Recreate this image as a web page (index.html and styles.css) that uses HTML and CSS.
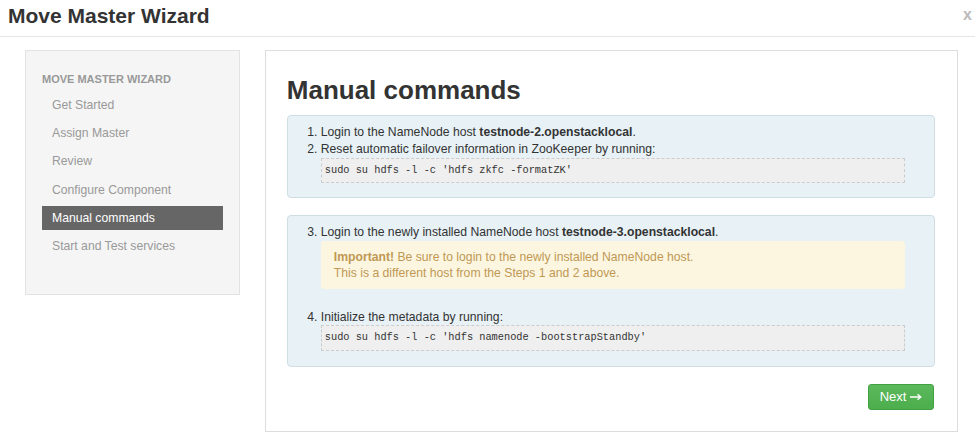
FILE: index.html
```html
<!DOCTYPE html>
<html>
<head>
<meta charset="utf-8">
<link rel="stylesheet" href="styles.css">
</head>
<body>
<div class="modal">
  <div class="modal-header">
    <h3 class="modal-title">Move Master Wizard</h3>
    <span class="close">x</span>
  </div>
  <div class="modal-body">
    <div class="sidebar">
      <div class="nav-header">MOVE MASTER WIZARD</div>
      <ul class="nav">
        <li>Get Started</li>
        <li>Assign Master</li>
        <li>Review</li>
        <li>Configure Component</li>
        <li class="active">Manual commands</li>
        <li>Start and Test services</li>
      </ul>
    </div>
    <div class="content">
      <h2 class="heading">Manual commands</h2>
      <div class="well">
        <ol class="steps" start="1">
          <li>Login to the NameNode host <b>testnode-2.openstacklocal</b>.</li>
          <li>Reset automatic failover information in ZooKeeper by running:
            <pre class="code">sudo su hdfs -l -c 'hdfs zkfc -formatZK'</pre>
          </li>
        </ol>
      </div>
      <div class="well well-2">
        <ol class="steps" start="3">
          <li>Login to the newly installed NameNode host <b>testnode-3.openstacklocal</b>.
            <div class="alert"><b>Important!</b> Be sure to login to the newly installed NameNode host.<br>This is a different host from the Steps 1 and 2 above.</div>
          </li>
          <li class="gap">Initialize the metadata by running:
            <pre class="code">sudo su hdfs -l -c 'hdfs namenode -bootstrapStandby'</pre>
          </li>
        </ol>
      </div>
      <div class="actions">
        <button class="btn-next">Next <svg class="arrow" width="12" height="8" viewBox="0 0 12 8"><path d="M0 4H10.5M7.5 1.2L10.8 4L7.5 6.8" fill="none" stroke="#fff" stroke-width="1.3"/></svg></button>
      </div>
    </div>
  </div>
</div>
</body>
</html>
```
FILE: styles.css
```css
* { box-sizing: border-box; }
html, body { margin: 0; padding: 0; background: #fff; }
body {
  font-family: "Liberation Sans", Arial, sans-serif;
  font-size: 12.2px;
  color: #333;
  width: 975px;
  height: 447px;
  overflow: hidden;
}
.modal-header {
  height: 37px;
  border-bottom: 1px solid #e5e5e5;
  display: flex;
  align-items: flex-start;
  justify-content: space-between;
  padding: 0 8px 0 8px;
}
.modal-title {
  margin: 4px 0 0 0;
  font-size: 21px;
  line-height: 24px;
  font-weight: bold;
  color: #333;
}
.close {
  margin-top: 6px;
  margin-right: -5px;
  font-size: 16px;
  font-weight: bold;
  color: #bbb;
  line-height: 18px;
}
.modal-body {
  display: flex;
  align-items: flex-start;
  padding: 13px 17px 0 25px;
  gap: 25px;
}
.sidebar {
  width: 215px;
  height: 245px;
  background: #f5f5f5;
  border: 1px solid #e3e3e3;
  padding: 20px 16px 0 16px;
}
.nav-header {
  font-size: 11px;
  font-weight: bold;
  color: #999;
  line-height: 14px;
  margin-top: 1px;
  margin-bottom: 7px;
}
.nav {
  list-style: none;
  margin: 0;
  padding: 0;
}
.nav li {
  height: 24px;
  line-height: 24px;
  margin-bottom: 4.2px;
  padding-left: 10px;
  color: #999;
  font-size: 12.2px;
}
.nav li.active {
  background: #666;
  color: #fff;
}
.content {
  width: 694px;
  height: 382px;
  border: 1px solid #ddd;
  padding: 0 22px 0 21px;
}
.heading {
  margin: 24px 0 10px 0;
  font-size: 26px;
  line-height: 30px;
  font-weight: bold;
  color: #333;
}
.well {
  background: #e7f1f6;
  border: 1px solid #cfdde5;
  border-radius: 4px;
  padding: 7.5px 29px 14px 18px;
  margin-bottom: 17px;
}
.well-2 { padding-bottom: 15px; }
.steps {
  margin: 0;
  padding-left: 15px;
  line-height: 17px;
}
.steps li { padding-left: 0; }
.steps li.gap { margin-top: 19.5px; }
.code {
  margin: 0 0 0 0;
  background: #efefef;
  border: 1px dashed #ccc;
  padding: 4px 3px 4px 3px;
  font-family: "Liberation Mono", "Courier New", monospace;
  font-size: 10.3px;
  line-height: 15.5px;
  color: #333;
}
.well-2 .code { margin-top: -0.5px; }
.alert {
  margin-top: 0.5px;
  background: #fcf6e1;
  border-radius: 3px;
  padding: 8px 12px 8px 13px;
  color: #c09853;
  line-height: 16px;
}
.actions {
  display: flex;
  justify-content: flex-end;
  margin-top: 1px;
  padding-right: 1px;
}
.btn-next {
  width: 66px;
  height: 26px;
  border: 1px solid #429f42;
  border-radius: 3px;
  background: linear-gradient(#5cb85c, #4cae4c);
  color: #fff;
  font-family: "Liberation Sans", Arial, sans-serif;
  font-size: 13px;
  padding: 0;
  display: flex;
  align-items: center;
  justify-content: center;
  gap: 4px;
}
.arrow { display: block; margin-top: 1px; }
```
